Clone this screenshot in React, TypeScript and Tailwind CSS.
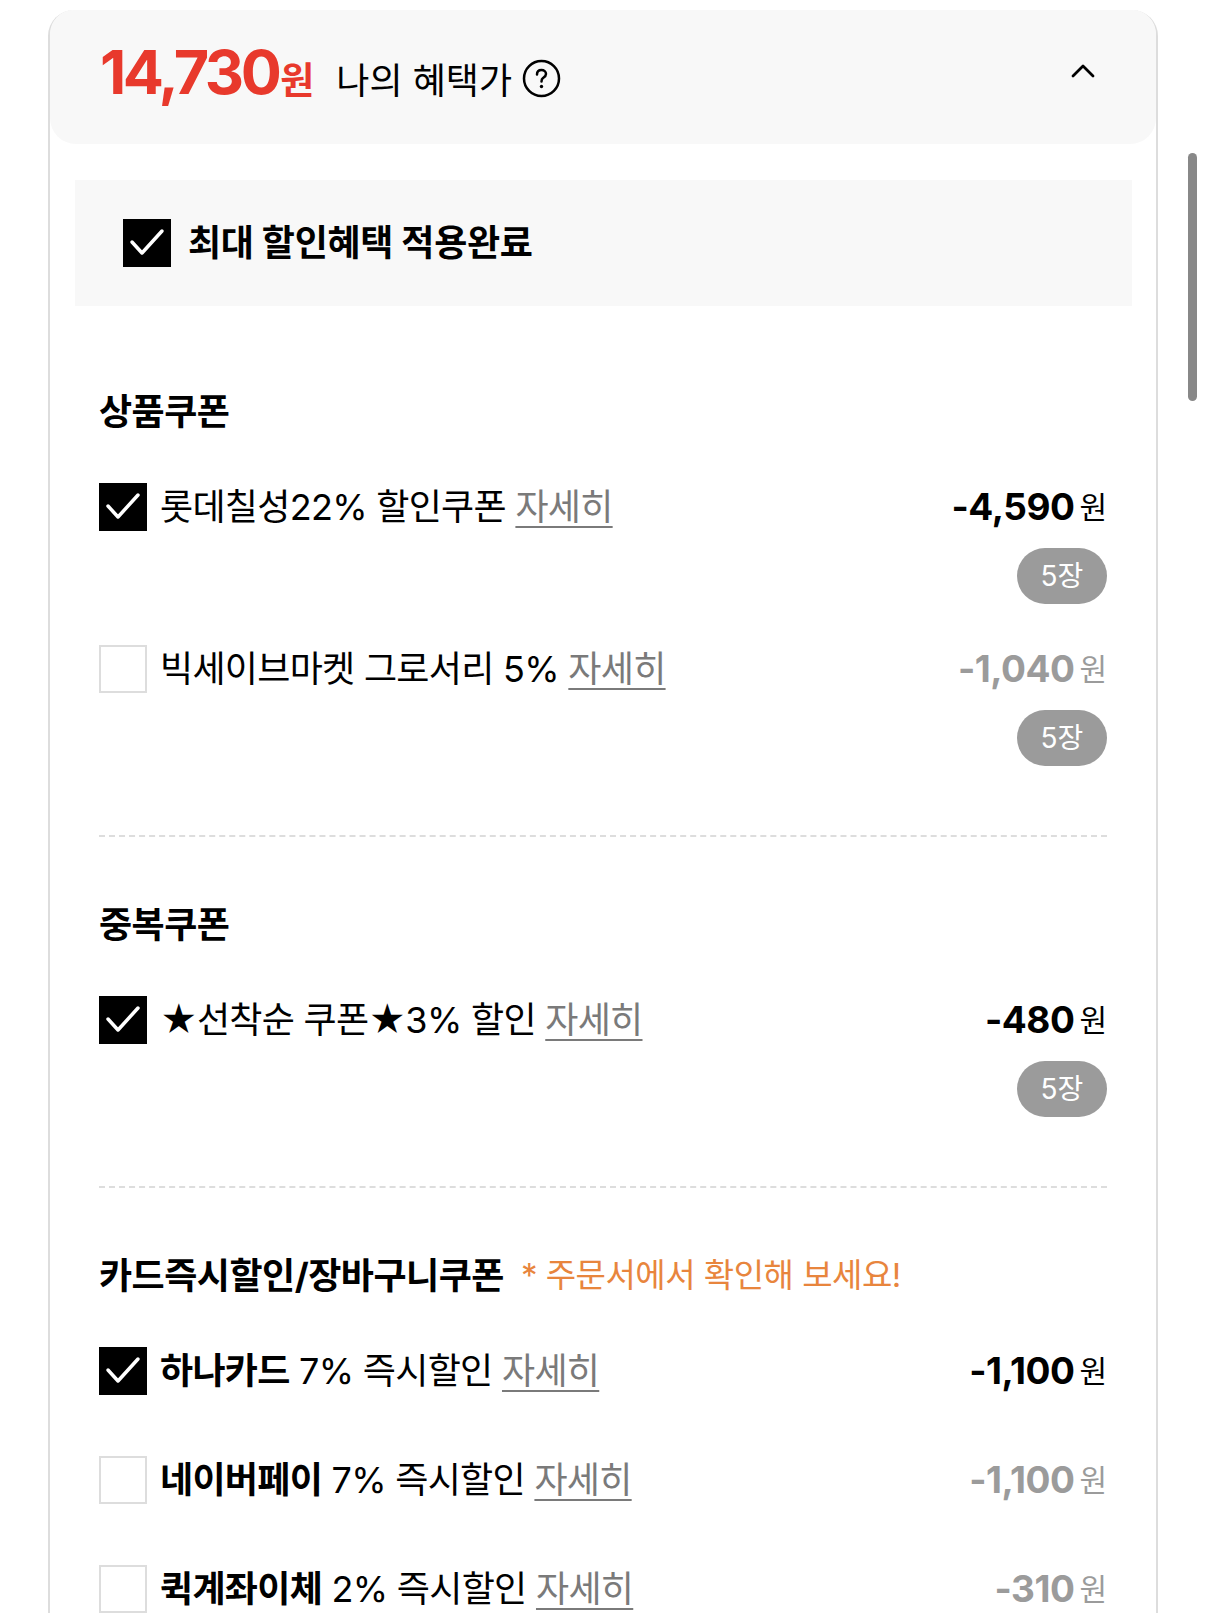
import React from "react";

type Coupon = {
  bold?: string;
  label: string;
  amount: string;
  checked: boolean;
  count?: string;
};

type Section = {
  title: string;
  note?: string;
  coupons: Coupon[];
};

const sections: Section[] = [
  {
    title: "상품쿠폰",
    coupons: [
      { label: "롯데칠성22% 할인쿠폰", amount: "-4,590", checked: true, count: "5장" },
      { label: "빅세이브마켓 그로서리 5%", amount: "-1,040", checked: false, count: "5장" },
    ],
  },
  {
    title: "중복쿠폰",
    coupons: [{ label: "★선착순 쿠폰★3% 할인", amount: "-480", checked: true, count: "5장" }],
  },
  {
    title: "카드즉시할인/장바구니쿠폰",
    note: "* 주문서에서 확인해 보세요!",
    coupons: [
      { bold: "하나카드", label: " 7% 즉시할인", amount: "-1,100", checked: true },
      { bold: "네이버페이", label: " 7% 즉시할인", amount: "-1,100", checked: false },
      { bold: "퀵계좌이체", label: " 2% 즉시할인", amount: "-310", checked: false },
    ],
  },
];

function CheckBox({ checked }: { checked: boolean }) {
  if (!checked) {
    return <span className="block h-[48px] w-[48px] shrink-0 border-2 border-[#dddddd] bg-white" />;
  }
  return (
    <span className="flex h-[48px] w-[48px] shrink-0 items-center justify-center bg-black">
      <svg width="48" height="48" viewBox="0 0 48 48" fill="none">
        <path d="M9 23 L19 34 L39 12" stroke="white" strokeWidth="3.5" strokeLinecap="round" strokeLinejoin="round" />
      </svg>
    </span>
  );
}

function CouponRow({ coupon }: { coupon: Coupon }) {
  const muted = !coupon.checked;
  return (
    <div className="flex items-start justify-between">
      <div className="flex h-[48px] items-center gap-[13px]">
        <CheckBox checked={coupon.checked} />
        <span className="whitespace-nowrap text-[36px] tracking-[-0.7px] text-black">
          {coupon.bold && <span className="font-bold">{coupon.bold}</span>}
          {coupon.label}{" "}
          <span className="text-[#7a7a7a] underline decoration-2 underline-offset-[6px]">자세히</span>
        </span>
      </div>
      <div className="flex flex-col items-end">
        <div className="flex h-[48px] items-center gap-[5px]">
          <span className={`text-[37px] font-bold tracking-[-0.5px] ${muted ? "text-[#9b9b9b]" : "text-black"}`}>
            {coupon.amount}
          </span>
          <span className={`text-[30px] ${muted ? "text-[#9b9b9b]" : "text-black"}`}>원</span>
        </div>
        {coupon.count && (
          <span className="mt-[17px] flex h-[56px] w-[90px] items-center justify-center rounded-full bg-[#9b9b9b] text-[28px] text-white">
            {coupon.count}
          </span>
        )}
      </div>
    </div>
  );
}

export default function App() {
  return (
    <div className="relative min-h-[1613px] overflow-hidden bg-white font-['Inter','Noto_Sans_CJK_KR',sans-serif]">
      {/* 스크롤바 */}
      <div className="absolute left-[1188px] top-[153px] h-[248px] w-[9px] rounded-full bg-[#888888]" />

      <div className="ml-[48px] mt-[10px] w-[1110px] rounded-t-[26px] border-x-2 border-t-0 border-[#dddddd] pb-[60px]">
        {/* 헤더 */}
        <div className="mt-[2px] flex h-[134px] items-center justify-between rounded-b-[26px] rounded-t-[24px] bg-[#f8f8f8] pb-[9px] pl-[50px] pr-[61px]">
          <div className="flex items-baseline">
            <span className="text-[61px] font-bold tracking-[-3.5px] text-[#e8392c]">14,730</span>
            <span className="ml-[2px] text-[37px] font-bold text-[#e8392c]">원</span>
            <span className="ml-[22px] text-[36px] text-black">나의 혜택가</span>
            <svg className="ml-[10px] translate-y-[4px]" width="39" height="39" viewBox="0 0 39 39" fill="none">
              <circle cx="19.5" cy="19.5" r="17.5" stroke="black" strokeWidth="2.5" />
              <path
                d="M15 15.5 C15 12.5 17 11 19.5 11 C22 11 24 12.6 24 15 C24 17.2 22.5 18 21 19 C20 19.7 19.5 20.5 19.5 22.5"
                stroke="black"
                strokeWidth="2.5"
                strokeLinecap="round"
              />
              <circle cx="19.5" cy="27.5" r="1.7" fill="black" />
            </svg>
          </div>
          <svg className="-translate-y-[2px]" width="24" height="15" viewBox="0 0 24 15" fill="none">
            <path d="M2 13 L12 3 L22 13" stroke="black" strokeWidth="2.8" strokeLinecap="round" strokeLinejoin="round" />
          </svg>
        </div>

        {/* 최대 할인혜택 배너 */}
        <div className="ml-[25px] mr-[24px] mt-[36px] flex h-[126px] items-center gap-[17px] bg-[#f8f8f8] pl-[48px]">
          <CheckBox checked />
          <span className="text-[36px] font-bold tracking-[-0.3px] text-black">최대 할인혜택 적용완료</span>
        </div>

        {/* 쿠폰 목록 */}
        <div className="ml-[49px] mr-[49px]">
          {sections.map((section, i) => (
            <div
              key={section.title}
              className={
                i === 0
                  ? "border-b-2 border-dashed border-[#dddddd] pb-[69px] pt-[82px]"
                  : i < sections.length - 1
                    ? "border-b-2 border-dashed border-[#dddddd] pb-[69px] pt-[64px]"
                    : "pt-[64px]"
              }
            >
              <div className="flex h-[48px] items-center gap-[17px] whitespace-nowrap">
                <span className="text-[36px] font-bold tracking-[-0.5px] text-black">{section.title}</span>
                {section.note && <span className="text-[33px] tracking-[-0.5px] text-[#e8853d]">{section.note}</span>}
              </div>
              <div className={`mt-[47px] flex flex-col ${section.coupons[0].count ? "gap-[41px]" : "gap-[61px]"}`}>
                {section.coupons.map((c) => (
                  <CouponRow key={c.label + c.bold} coupon={c} />
                ))}
              </div>
            </div>
          ))}
        </div>
      </div>
    </div>
  );
}
